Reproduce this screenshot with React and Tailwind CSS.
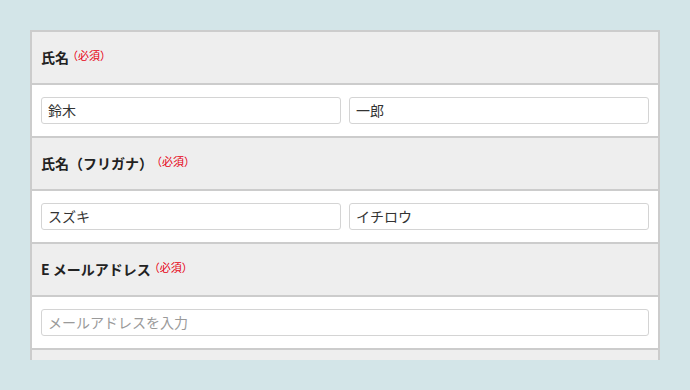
const FIELDS = [
  { label: '氏名', inputs: [{ value: '鈴木' }, { value: '一郎' }] },
  { label: '氏名（フリガナ）', inputs: [{ value: 'スズキ' }, { value: 'イチロウ' }] },
  { label: 'E メールアドレス', inputs: [{ placeholder: 'メールアドレスを入力' }] },
];

export default function App() {
  return (
    <div
      className="w-[690px] h-[390px] bg-[#d3e5e8] pt-[30px] px-[30px]"
      style={{ fontFamily: '"Noto Sans CJK JP", "Noto Sans", sans-serif' }}
    >
      <div className="h-[330px] overflow-hidden">
        <div className="border-2 border-[#cccccc] bg-white">
          {FIELDS.map(field => (
            <div key={field.label}>
              {/* Label row */}
              <div className="h-[53px] bg-[#eeeeee] border-b-2 border-[#cccccc] flex items-center px-[9px] pb-[1px]">
                <span className="text-[14px] font-bold text-[#222]">{field.label}</span>
                <span className="text-[11px] text-[#e60012] -ml-[2px] -mt-[3px]">（必須）</span>
              </div>

              {/* Input row */}
              <div className="h-[53px] border-b-2 border-[#cccccc] flex items-center gap-[8px] px-[9px] pb-[1px]">
                {field.inputs.map((inp, i) => (
                  <input
                    key={i}
                    readOnly
                    defaultValue={inp.value}
                    placeholder={inp.placeholder}
                    className="flex-1 min-w-0 h-[27px] border border-[#d4d4d4] rounded-[3px] px-[6px] text-[14px] text-[#333] placeholder:text-[#9a9a9a] bg-white outline-none"
                  />
                ))}
              </div>
            </div>
          ))}
          {/* next section, cut off by the frame */}
          <div className="h-[53px] bg-[#eeeeee]" />
        </div>
      </div>
    </div>
  );
}
